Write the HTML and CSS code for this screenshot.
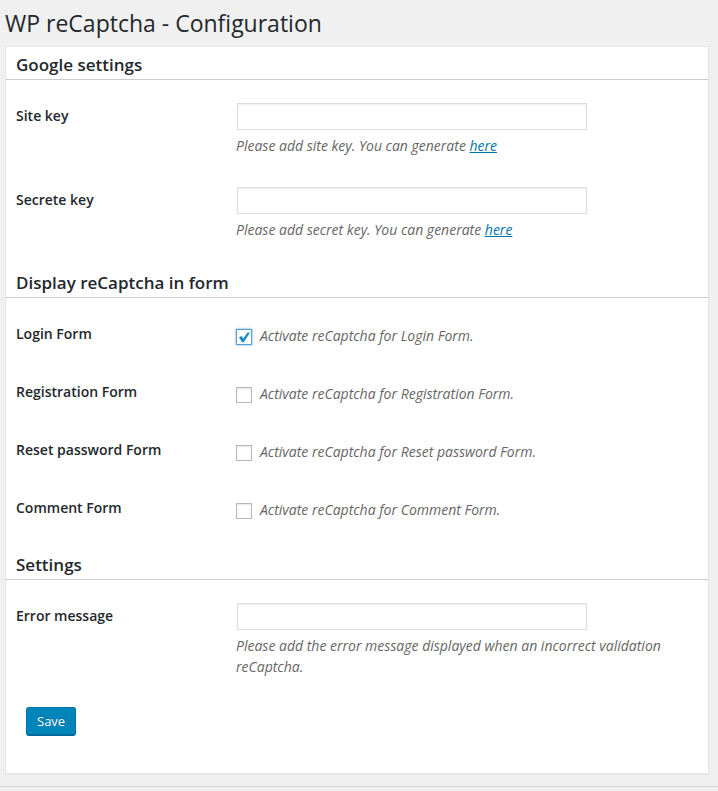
FILE: index.html
```
<!DOCTYPE html>
<html lang="en">
<head>
<meta charset="utf-8">
<title>WP reCaptcha - Configuration</title>
<link rel="stylesheet" href="styles.css">
</head>
<body>
<main class="wrap">
  <h1 class="title">WP reCaptcha - Configuration</h1>
  <form class="panel">
    <section>
      <h2 class="heading">Google settings</h2>
      <div class="rows">
        <div class="row">
          <label class="label" for="site-key">Site key</label>
          <div class="field">
            <input class="text" type="text" id="site-key">
            <p class="description">Please add site key. You can generate <a href="#">here</a></p>
          </div>
        </div>
        <div class="row">
          <label class="label" for="secret-key">Secrete key</label>
          <div class="field">
            <input class="text" type="text" id="secret-key">
            <p class="description">Please add secret key. You can generate <a href="#">here</a></p>
          </div>
        </div>
      </div>
    </section>
    <section>
      <h2 class="heading">Display reCaptcha in form</h2>
      <div class="rows">
        <div class="row">
          <label class="label" for="login">Login Form</label>
          <div class="field option">
            <input class="check" type="checkbox" id="login" checked>
            <span class="note">Activate reCaptcha for Login Form.</span>
          </div>
        </div>
        <div class="row">
          <label class="label" for="registration">Registration Form</label>
          <div class="field option">
            <input class="check" type="checkbox" id="registration">
            <span class="note">Activate reCaptcha for Registration Form.</span>
          </div>
        </div>
        <div class="row">
          <label class="label" for="reset">Reset password Form</label>
          <div class="field option">
            <input class="check" type="checkbox" id="reset">
            <span class="note">Activate reCaptcha for Reset password Form.</span>
          </div>
        </div>
        <div class="row">
          <label class="label" for="comment">Comment Form</label>
          <div class="field option">
            <input class="check" type="checkbox" id="comment">
            <span class="note">Activate reCaptcha for Comment Form.</span>
          </div>
        </div>
      </div>
    </section>
    <section>
      <h2 class="heading">Settings</h2>
      <div class="rows">
        <div class="row">
          <label class="label" for="error">Error message</label>
          <div class="field">
            <input class="text" type="text" id="error">
            <p class="description">Please add the error message displayed when an incorrect validation reCaptcha.</p>
          </div>
        </div>
      </div>
    </section>
    <button class="save" type="button">Save</button>
  </form>
</main>
<footer class="footer"></footer>
</body>
</html>
```
FILE: styles.css
```
* {
  box-sizing: border-box;
}

body {
  margin: 0;
  background: #f0f0f0;
  color: #23282d;
  font: 14px/21px "Open Sans", sans-serif;
}

.wrap {
  padding: 8px 9px 12px 5px;
}

.title {
  margin: 0;
  padding-bottom: 8px;
  font-size: 23px;
  font-weight: 400;
  line-height: 30px;
}

.panel {
  padding-bottom: 37px;
  background: #fff;
  border: 1px solid #e5e5e5;
  box-shadow: 0 1px 1px rgba(0, 0, 0, 0.04);
}

.heading {
  margin: 0;
  padding: 6px 10px 2px;
  border-bottom: 1px solid #ccc;
  font-size: 17px;
  font-weight: 600;
  line-height: 24px;
}

.rows {
  padding: 8px 0 9px;
}

.row {
  display: grid;
  grid-template-columns: 220px 1fr;
}

.label {
  padding: 19px 10px;
  font-weight: 600;
  line-height: 18px;
}

.field {
  padding: 15px 10px 16px;
}

.text {
  display: block;
  width: 350px;
  max-width: 100%;
  height: 27px;
  margin: 0 1px;
  padding: 3px 5px;
  border: 1px solid #ddd;
  background: #fff;
  box-shadow: inset 0 1px 2px rgba(0, 0, 0, 0.07);
  color: #32373c;
  font: inherit;
}

.description {
  margin: 5px 0 0;
}

.description,
.note {
  color: #666;
  font-style: italic;
}

.description a {
  color: #0073aa;
}

.option {
  display: flex;
  align-items: flex-start;
  gap: 8px;
  padding: 19px 10px 18px;
}

.check {
  flex: none;
  width: 16px;
  height: 16px;
  margin: 4px 0 0;
  appearance: none;
  border: 1px solid #b4b9be;
  background: #fff;
  box-shadow: inset 0 1px 2px rgba(0, 0, 0, 0.1);
}

.check:checked {
  border-color: #5b9dd9;
  background: #fff url("data:image/svg+xml,%3Csvg xmlns='http://www.w3.org/2000/svg' viewBox='0 0 14 14'%3E%3Cpath d='M2 7.3 4.4 6 6.2 8.4 10.6 2.4 13 2.4 6.8 12.2 5 12.2Z' fill='%231e8cbe'/%3E%3C/svg%3E") center / 14px 14px no-repeat;
  box-shadow: 0 0 2px rgba(30, 140, 190, 0.8);
}

.save {
  display: block;
  height: 29px;
  margin: 5px 20px 0;
  padding: 0 10px;
  border: 1px solid #0073aa;
  border-bottom: 2px solid #006799;
  border-radius: 3px;
  background: #0085ba;
  color: #fff;
  font: 13px/26px "Open Sans", sans-serif;
  text-shadow: 0 -1px 1px #006799;
}

.footer {
  height: 5px;
  border-top: 1px solid #d5d5d5;
}
```
